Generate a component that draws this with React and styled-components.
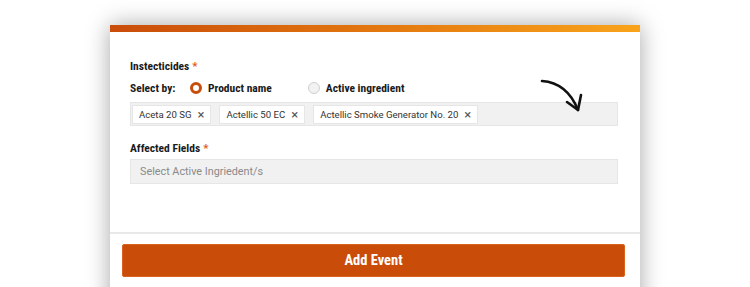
import React from 'react';
import styled, { createGlobalStyle } from 'styled-components';

const GlobalStyle = createGlobalStyle`
  html, body {
    margin: 0;
    padding: 0;
    background: #ffffff;
    overflow: hidden;
  }
  body {
    font-family: Roboto, "Liberation Sans", sans-serif;
  }
`;

const Page = styled.div`
  width: 750px;
  height: 287px;
  padding-top: 25px;
  box-sizing: border-box;
  overflow: hidden;
`;

const Card = styled.div`
  width: 530px;
  height: 300px;
  margin-left: 110px;
  background: #ffffff;
  box-shadow: 0 0 22px rgba(0, 0, 0, 0.35);
`;

const TopBar = styled.div`
  height: 7px;
  background: linear-gradient(90deg, #c94c09 0%, #e3770f 50%, #f9a31b 100%);
`;

const Body = styled.div`
  padding: 27px 22px 0 20px;
`;

const Label = styled.div`
  font-family: "Liberation Sans Narrow", "Roboto Condensed", Roboto, sans-serif;
  font-stretch: condensed;
  font-weight: 700;
  font-size: 11.5px;
  line-height: 14px;
  color: #1a1a1a;
  margin-top: ${(p) => p.$mt || 0}px;
`;

const Star = styled.span`
  color: #e25d17;
  margin-left: 3px;
`;

const SelectRow = styled.div`
  display: flex;
  align-items: center;
  height: 16px;
  margin-top: 7px;
`;

const SelectCaption = styled(Label)`
  width: 60px;
`;

const RadioOption = styled.label`
  display: flex;
  align-items: center;
  gap: 6px;
  margin-right: ${(p) => p.$mr || 0}px;
  font-family: "Liberation Sans Narrow", "Roboto Condensed", Roboto, sans-serif;
  font-stretch: condensed;
  font-weight: 700;
  font-size: 11.5px;
  color: #1a1a1a;
`;

const RadioDot = styled.span`
  width: 12px;
  height: 12px;
  border-radius: 50%;
  box-sizing: border-box;
  border: ${(p) => (p.$on ? '3.5px solid #c94d0a' : '1px solid #cfcfcf')};
  background: ${(p) => (p.$on ? '#ffffff' : '#f2f2f2')};
`;

const FieldWrap = styled.div`
  position: relative;
`;

const TagBox = styled.div`
  display: flex;
  align-items: center;
  gap: 8px;
  height: 24px;
  margin-top: 6px;
  padding: 0 1px;
  box-sizing: border-box;
  background: #f1f1f1;
  border: 1px solid #e6e6e6;
`;

const Tag = styled.div`
  display: flex;
  align-items: center;
  height: 19px;
  padding: 0 6px 0 6px;
  background: #ffffff;
  border: 1px solid #e6e6e6;
  box-sizing: border-box;
  font-size: 9.6px;
  color: #333333;
  white-space: nowrap;
`;

const TagClose = styled.span`
  margin-left: 6px;
  font-size: 13px;
  color: #555555;
  line-height: 1;
`;

const Arrow = styled.svg`
  position: absolute;
  left: 408px;
  top: -26px;
`;

const InputBox = styled.div`
  display: flex;
  align-items: center;
  height: 25px;
  margin-top: 4px;
  padding: 0 9px;
  box-sizing: border-box;
  background: #f1f1f1;
  border: 1px solid #e6e6e6;
  font-size: 10.8px;
  color: #8a8a8a;
`;

const Divider = styled.div`
  height: 2px;
  background: #e8e8e8;
  margin-top: 48px;
`;

const Footer = styled.div`
  padding: 10px 15px 0 12px;
`;

const Button = styled.button`
  display: block;
  width: 100%;
  height: 33px;
  border: 1px solid #d8621e;
  border-radius: 2px;
  background: #c94c09;
  color: #ffffff;
  font-family: "Liberation Sans Narrow", "Roboto Condensed", Roboto, sans-serif;
  font-stretch: condensed;
  font-weight: 700;
  font-size: 14.5px;
  cursor: pointer;
`;

const tags = ['Aceta 20 SG', 'Actellic 50 EC', 'Actellic Smoke Generator No. 20'];

function App() {
  return (
    <Page>
      <GlobalStyle />
      <Card>
        <TopBar />
        <Body>
          <Label>
            Instecticides<Star>*</Star>
          </Label>
          <SelectRow>
            <SelectCaption>Select by:</SelectCaption>
            <RadioOption $mr={36}>
              <RadioDot $on />
              Product name
            </RadioOption>
            <RadioOption>
              <RadioDot />
              Active ingredient
            </RadioOption>
          </SelectRow>
          <FieldWrap>
            <TagBox>
              {tags.map((t) => (
                <Tag key={t}>
                  {t}
                  <TagClose>×</TagClose>
                </Tag>
              ))}
            </TagBox>
            <Arrow width="50" height="40" viewBox="0 0 50 40">
              <path
                d="M4 5 C 18 6, 32 14, 40 34"
                fill="none"
                stroke="#111"
                strokeWidth="2.6"
                strokeLinecap="round"
              />
              <path
                d="M29 26 L 40 34 L 43 19"
                fill="none"
                stroke="#111"
                strokeWidth="2.6"
                strokeLinecap="round"
                strokeLinejoin="round"
              />
            </Arrow>
          </FieldWrap>
          <Label $mt={15}>
            Affected Fields<Star>*</Star>
          </Label>
          <InputBox>Select Active Ingriedent/s</InputBox>
        </Body>
        <Divider />
        <Footer>
          <Button>Add Event</Button>
        </Footer>
      </Card>
    </Page>
  );
}

export default App;
